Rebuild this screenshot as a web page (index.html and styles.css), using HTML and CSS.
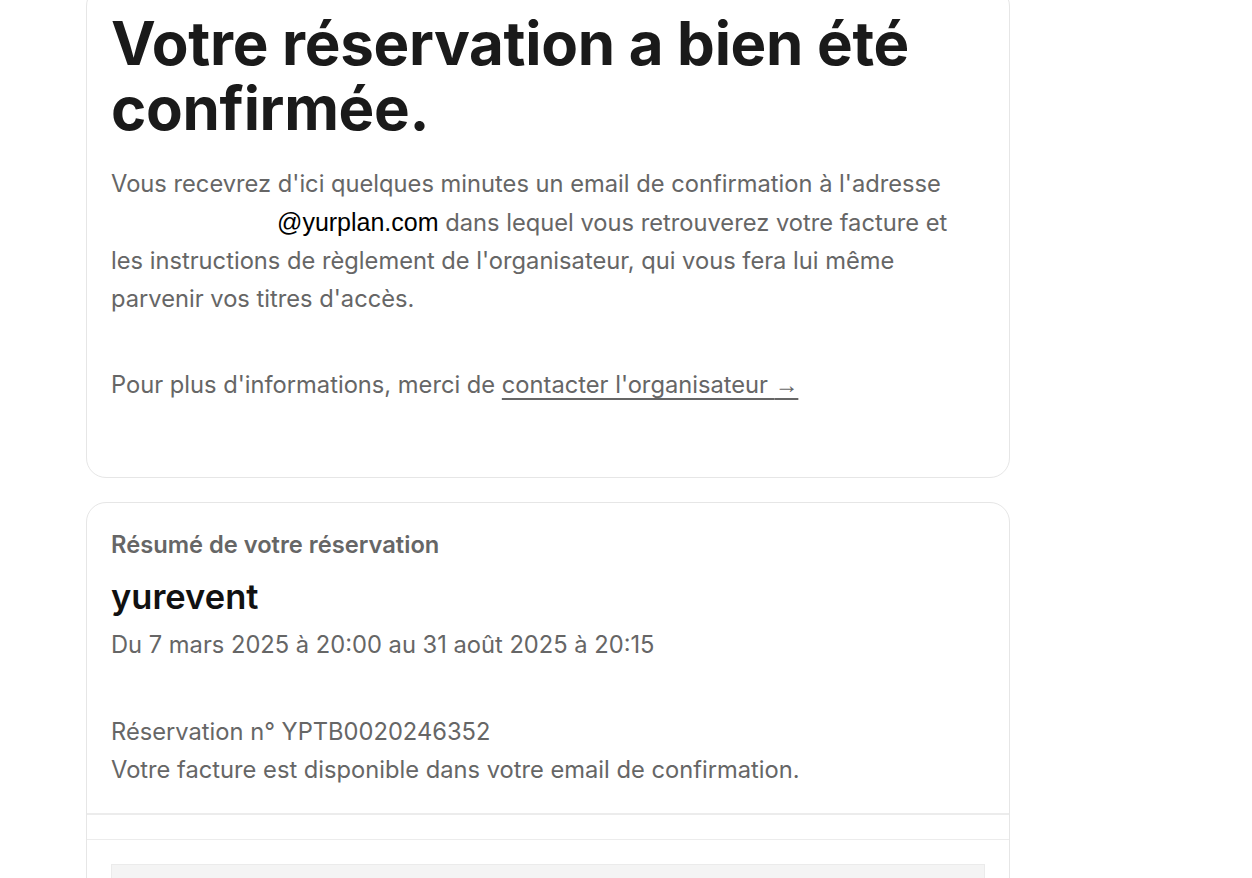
FILE: index.html
```html
<!DOCTYPE html>
<html lang="fr">
<head>
<meta charset="utf-8">
<title>Réservation confirmée</title>
<link rel="stylesheet" href="styles.css">
</head>
<body>
<main class="page">
  <section class="card card-confirm">
    <h1 class="title">Votre réservation a bien été confirmée.</h1>
    <p class="text">Vous recevrez d'ici quelques minutes un email de confirmation à l'adresse <span class="email">@yurplan.com</span> dans lequel vous retrouverez votre facture et les instructions de règlement de l'organisateur, qui vous fera lui même parvenir vos titres d'accès.</p>
    <p class="text more">Pour plus d'informations, merci de <a class="link" href="#">contacter l'organisateur <span class="arrow">→</span></a></p>
  </section>
  <section class="card card-summary">
    <div class="summary-body">
      <h2 class="summary-label">Résumé de votre réservation</h2>
      <h3 class="event-name">yurevent</h3>
      <p class="event-date">Du 7 mars 2025 à 20:00 au 31 août 2025 à 20:15</p>
      <p class="booking">Réservation n° YPTB0020246352<br>Votre facture est disponible dans votre email de confirmation.</p>
    </div>
    <div class="spacer-row"></div>
    <div class="tickets">
      <div class="ticket-box"></div>
    </div>
  </section>
</main>
</body>
</html>
```

FILE: styles.css
```css
* { box-sizing: border-box; }
html, body { margin: 0; padding: 0; background: #fff; }
body {
  font-family: Inter, "Noto Sans", sans-serif;
  color: #1a1a1a;
  overflow: hidden;
}
.page {
  width: 924px;
  margin-left: 86px;
  margin-top: -14px;
  display: flex;
  flex-direction: column;
  gap: 24px;
}
.card {
  border: 1px solid #e6e6e6;
  border-radius: 20px;
  background: #fff;
}
.card-confirm {
  padding: 24px 24px 73px;
}
.title {
  margin: 0;
  font-size: 60px;
  line-height: 65px;
  font-weight: 700;
  letter-spacing: -0.3px;
  color: #1a1a1a;
}
.text {
  margin: 24px 0 0;
  font-size: 23.7px;
  line-height: 38px;
  color: #666;
}
.text.more { margin-top: 48px; }
.email {
  font-family: "Liberation Sans", Arial, sans-serif;
  font-size: 25px;
  color: #000;
  padding-left: 166px;
}
.link {
  color: #666;
  text-decoration: underline;
  text-decoration-thickness: 2px;
  text-underline-offset: 5px;
}
.arrow {
  font-family: "Liberation Sans", Arial, sans-serif;
}
.summary-body {
  padding: 25px 24px 24px;
  border-bottom: 2px solid #ececec;
}
.summary-label {
  margin: 0;
  font-size: 23.7px;
  line-height: 34px;
  font-weight: 600;
  color: #666;
}
.event-name {
  margin: 15px 0 0;
  font-size: 34.5px;
  line-height: 40px;
  font-weight: 600;
  color: #111;
}
.event-date {
  margin: 9px 0 0;
  font-size: 23.7px;
  line-height: 38px;
  color: #666;
}
.booking {
  margin: 49px 0 0;
  font-size: 23.7px;
  line-height: 38px;
  color: #666;
}
.spacer-row {
  height: 25px;
  border-bottom: 1px solid #ececec;
}
.tickets {
  padding: 24px 24px;
}
.ticket-box {
  height: 80px;
  background: #f4f4f4;
  border: 1px solid #ebebeb;
}
```
